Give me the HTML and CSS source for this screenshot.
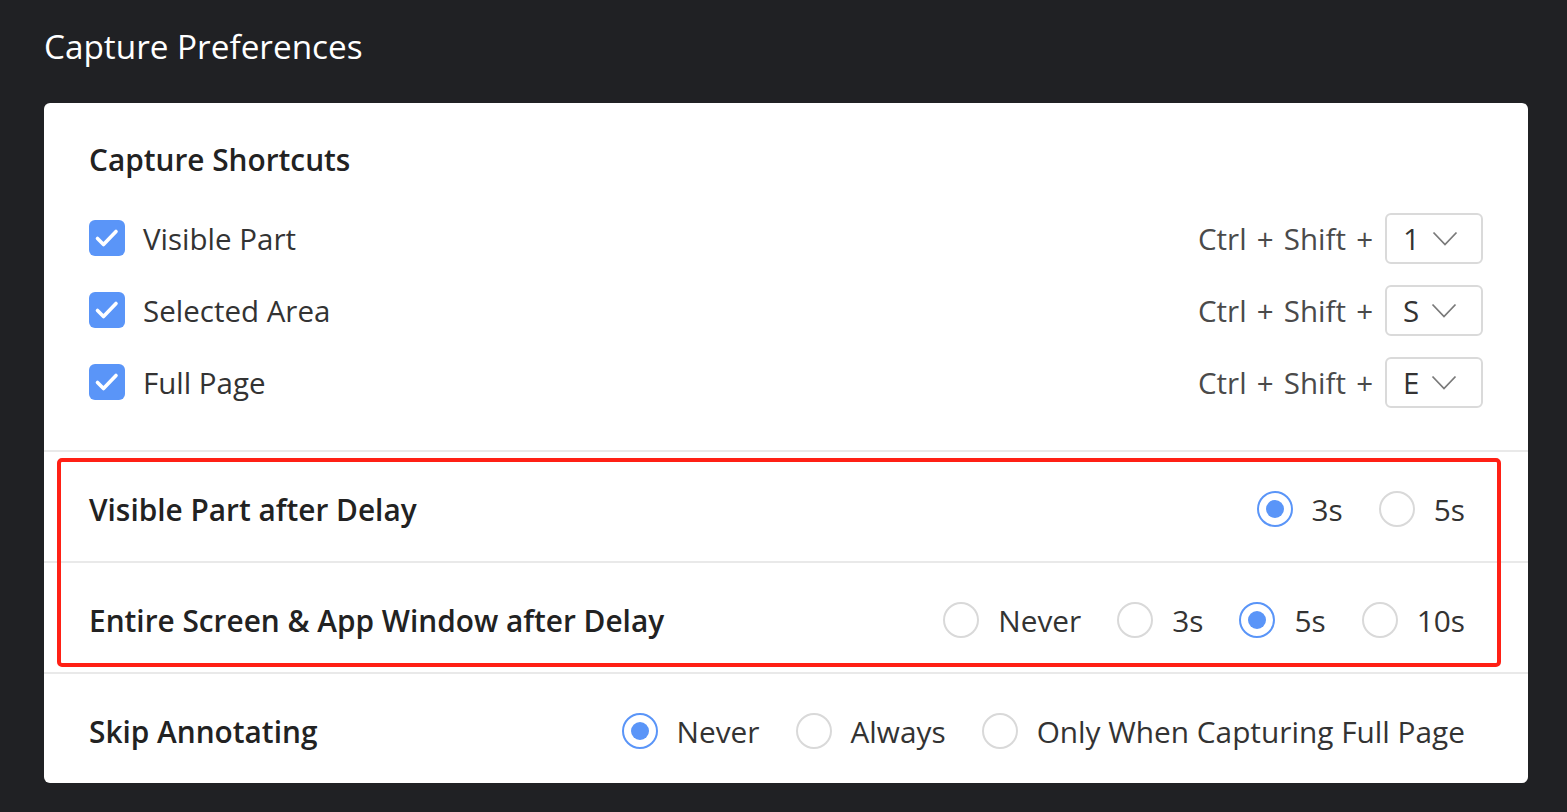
FILE: index.html
```html
<!DOCTYPE html>
<html lang="en">
<head>
    <meta charset="UTF-8">
    <title>Capture Preferences</title>
<link rel="stylesheet" href="styles.css">
</head>
<body class="page">
<h1 class="title">Capture Preferences</h1>
<div class="card">
    <div class="shortcuts">
        <h2 class="heading">Capture Shortcuts</h2>
        <div class="sc-row">
            <label class="check"><span class="box"><svg width="36" height="36" viewBox="0 0 36 36"><path d="M8.5 18.5l6 6 12.5-13" fill="none" stroke="#fff" stroke-width="3.6" stroke-linecap="round" stroke-linejoin="round"/></svg></span>Visible Part</label>
            <div class="keys">Ctrl + Shift +<span class="sel">1<svg width="26" height="15" viewBox="0 0 26 15"><path d="M1.5 1.5l11.5 12 11.5-12" fill="none" stroke="#7a7a7a" stroke-width="1.8"/></svg></span></div>
        </div>
        <div class="sc-row">
            <label class="check"><span class="box"><svg width="36" height="36" viewBox="0 0 36 36"><path d="M8.5 18.5l6 6 12.5-13" fill="none" stroke="#fff" stroke-width="3.6" stroke-linecap="round" stroke-linejoin="round"/></svg></span>Selected Area</label>
            <div class="keys">Ctrl + Shift +<span class="sel">S<svg width="26" height="15" viewBox="0 0 26 15"><path d="M1.5 1.5l11.5 12 11.5-12" fill="none" stroke="#7a7a7a" stroke-width="1.8"/></svg></span></div>
        </div>
        <div class="sc-row">
            <label class="check"><span class="box"><svg width="36" height="36" viewBox="0 0 36 36"><path d="M8.5 18.5l6 6 12.5-13" fill="none" stroke="#fff" stroke-width="3.6" stroke-linecap="round" stroke-linejoin="round"/></svg></span>Full Page</label>
            <div class="keys">Ctrl + Shift +<span class="sel">E<svg width="26" height="15" viewBox="0 0 26 15"><path d="M1.5 1.5l11.5 12 11.5-12" fill="none" stroke="#7a7a7a" stroke-width="1.8"/></svg></span></div>
        </div>
    </div>
    <div class="delay">
        <div class="row">
            <span class="heading">Visible Part after Delay</span>
            <div class="opts">
                <span class="opt"><i class="radio on"></i>3s</span>
                <span class="opt"><i class="radio"></i>5s</span>
            </div>
        </div>
        <div class="row">
            <span class="heading">Entire Screen &amp; App Window after Delay</span>
            <div class="opts">
                <span class="opt"><i class="radio"></i>Never</span>
                <span class="opt"><i class="radio"></i>3s</span>
                <span class="opt"><i class="radio on"></i>5s</span>
                <span class="opt"><i class="radio"></i>10s</span>
            </div>
        </div>
        <div class="mark"></div>
    </div>
    <div class="row">
        <span class="heading">Skip Annotating</span>
        <div class="opts">
            <span class="opt"><i class="radio on"></i>Never</span>
            <span class="opt"><i class="radio"></i>Always</span>
            <span class="opt"><i class="radio"></i>Only When Capturing Full Page</span>
        </div>
    </div>
</div>
</body>
</html>
```

FILE: styles.css
```css
.page{
    margin: 0;
    background-color: #202124;
    font-family: "Open Sans", "Noto Sans", sans-serif;
    padding: 0 39px 0 44px;
}
.title{
    margin: 0;
    padding: 24px 0 35px 0;
    font-size: 33.3px;
    font-weight: normal;
    color: #ffffff;
    line-height: 44px;
}
.card{
    background-color: #ffffff;
    border-radius: 6px;
    height: 680px;
    box-sizing: border-box;
}
.shortcuts{
    padding: 36px 45px 0 45px;
    height: 349px;
    box-sizing: border-box;
    border-bottom: 2px solid #e9e9e9;
}
.heading{
    margin: 0;
    font-size: 29.8px;
    font-weight: 600;
    color: #222222;
}
.shortcuts .heading{
    line-height: 42px;
    margin-bottom: 21px;
}
.sc-row{
    display: flex;
    justify-content: space-between;
    align-items: center;
    height: 72px;
}
.check{
    display: flex;
    align-items: center;
    gap: 18px;
    font-size: 29.5px;
    color: #333333;
}
.box{
    width: 36px;
    height: 36px;
    border-radius: 6px;
    background-color: #5a95f8;
    display: flex;
}
.keys{
    display: flex;
    align-items: center;
    gap: 12px;
    font-size: 29.5px;
    word-spacing: 2.5px;
    color: #4a4a4a;
}
.sel{
    width: 98px;
    height: 51px;
    box-sizing: border-box;
    border: 2px solid #dadada;
    border-radius: 6px;
    display: flex;
    align-items: center;
    gap: 12px;
    padding-left: 16px;
    color: #333333;
}
.delay{
    position: relative;
}
.row{
    display: flex;
    justify-content: space-between;
    align-items: center;
    height: 104px;
    padding: 5px 63px 0 45px;
    border-bottom: 2px solid #e9e9e9;
}
.card > .row{
    border-bottom: none;
}
.opts{
    display: flex;
    align-items: center;
    gap: 36px;
}
.opt{
    display: flex;
    align-items: center;
    gap: 19px;
    font-size: 29.8px;
    color: #333333;
}
.radio{
    width: 36px;
    height: 36px;
    box-sizing: border-box;
    border: 2px solid #d9d9d9;
    border-radius: 50%;
    display: inline-block;
    position: relative;
}
.radio.on{
    border-color: #5a95f8;
}
.radio.on::after{
    content: "";
    position: absolute;
    left: 7px;
    top: 7px;
    width: 18px;
    height: 18px;
    border-radius: 50%;
    background-color: #5a95f8;
}
/* red highlight box drawn over the two delay rows */
.mark{
    position: absolute;
    left: 13px;
    top: 6px;
    width: 1444px;
    height: 209px;
    box-sizing: border-box;
    border: 4px solid #ff2015;
    border-radius: 5px;
}
```
